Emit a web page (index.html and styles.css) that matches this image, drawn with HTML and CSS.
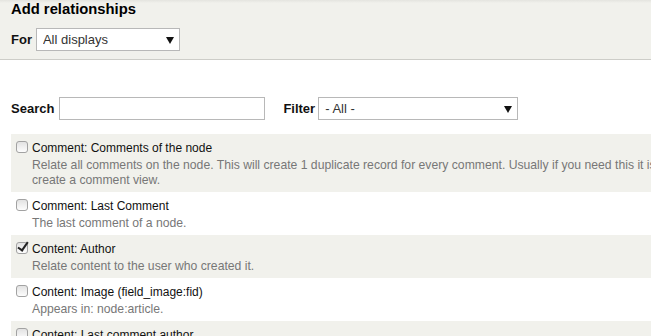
FILE: index.html
```html
<!DOCTYPE html>
<html lang="en">
<head>
    <meta charset="UTF-8">
    <title>Add relationships</title>
    <link rel="stylesheet" href="styles.css">
</head>
<body>
    <div class="header">
        <h2>Add relationships</h2>
        <div class="for-row">
            <label for="display">For</label>
            <div class="select-wrap select-display">
                <select id="display">
                    <option>All displays</option>
                </select>
            </div>
        </div>
    </div>

    <div class="content">
        <div class="filters">
            <label for="search">Search</label>
            <input type="text" id="search" class="search-input">
            <label for="filter" class="filter-label">Filter</label>
            <div class="select-wrap select-filter">
                <select id="filter">
                    <option>- All -</option>
                </select>
            </div>
        </div>

        <div class="options">
            <div class="option odd">
                <div class="option-title">
                    <span class="checkbox"></span>
                    <span>Comment: Comments of the node</span>
                </div>
                <div class="description wrap">Relate all comments on the node. This will create 1 duplicate record for every comment. Usually if you need this it is better to create a comment view.</div>
            </div>
            <div class="option">
                <div class="option-title">
                    <span class="checkbox"></span>
                    <span>Comment: Last Comment</span>
                </div>
                <div class="description">The last comment of a node.</div>
            </div>
            <div class="option odd">
                <div class="option-title">
                    <span class="checkbox checked"></span>
                    <span>Content: Author</span>
                </div>
                <div class="description">Relate content to the user who created it.</div>
            </div>
            <div class="option">
                <div class="option-title">
                    <span class="checkbox"></span>
                    <span>Content: Image (field_image:fid)</span>
                </div>
                <div class="description">Appears in: node:article.</div>
            </div>
            <div class="option odd">
                <div class="option-title">
                    <span class="checkbox"></span>
                    <span>Content: Last comment author</span>
                </div>
                <div class="description">The user who posted the last comment.</div>
            </div>
        </div>
    </div>
</body>
</html>
```

FILE: styles.css
```css
body {
    margin: 0;
    font-family: "Liberation Sans", Arial, sans-serif;
    font-size: 13px;
    color: #222;
    background-color: white;
    overflow: hidden;
}
.header {
    background-color: #f1f1ec;
    background-image: linear-gradient(#e4e4df, #f1f1ec 3px);
    padding: 0 11px 8px;
    border-bottom: 1px solid #cdcdc8;
}
.header h2 {
    margin: 0;
    font-size: 14.8px;
    line-height: 18px;
    color: #000;
}
.for-row {
    display: flex;
    align-items: center;
    gap: 4px;
    margin-top: 10px;
}
label {
    font-weight: bold;
    color: #111;
}
.select-wrap {
    position: relative;
    height: 23px;
    box-sizing: border-box;
    border: 1px solid #b8b8b8;
    background-color: white;
}
.select-wrap select {
    -webkit-appearance: none;
    appearance: none;
    border: none;
    background: transparent;
    width: 100%;
    height: 100%;
    padding: 0 0 0 6px;
    margin: 0;
    font-family: inherit;
    font-size: 13px;
    color: #333;
    outline: none;
}
.select-wrap::after {
    content: "";
    position: absolute;
    right: 5px;
    top: 8px;
    border-left: 4px solid transparent;
    border-right: 4px solid transparent;
    border-top: 7px solid #111;
}
.select-display {
    width: 144px;
}
.content {
    padding: 37px 0 0 11px;
}
.filters {
    display: flex;
    align-items: center;
}
.search-input {
    width: 206px;
    height: 23px;
    box-sizing: border-box;
    border: 1px solid #b8b8b8;
    margin: 0 0 0 5px;
    padding: 0 4px;
    font-family: inherit;
    font-size: 13px;
}
.filter-label {
    margin-left: 18px;
    margin-right: 3px;
}
.select-filter {
    width: 200px;
}
.options {
    margin-top: 14px;
}
.option {
    padding: 6px 0 4px 21px;
    position: relative;
}
.option.odd {
    background-color: #f1f1ec;
}
.option-title {
    font-size: 12px;
    line-height: 16px;
    color: #111;
}
.checkbox {
    position: absolute;
    left: 5px;
    top: 7px;
    width: 12px;
    height: 12px;
    box-sizing: border-box;
    border: 1px solid #a2a2a2;
    border-radius: 3px;
    background-image: linear-gradient(#e2e2e2, #fdfdfd);
}
.checkbox.checked::after {
    content: "";
    position: absolute;
    left: 3px;
    top: -3px;
    width: 4px;
    height: 9px;
    border-right: 2px solid #222;
    border-bottom: 2px solid #222;
    transform: rotate(35deg);
}
.description {
    margin-top: 2px;
    font-size: 12.2px;
    line-height: 15px;
    color: #777;
    white-space: nowrap;
}
.description.wrap {
    white-space: normal;
    width: 688px;
}
```
